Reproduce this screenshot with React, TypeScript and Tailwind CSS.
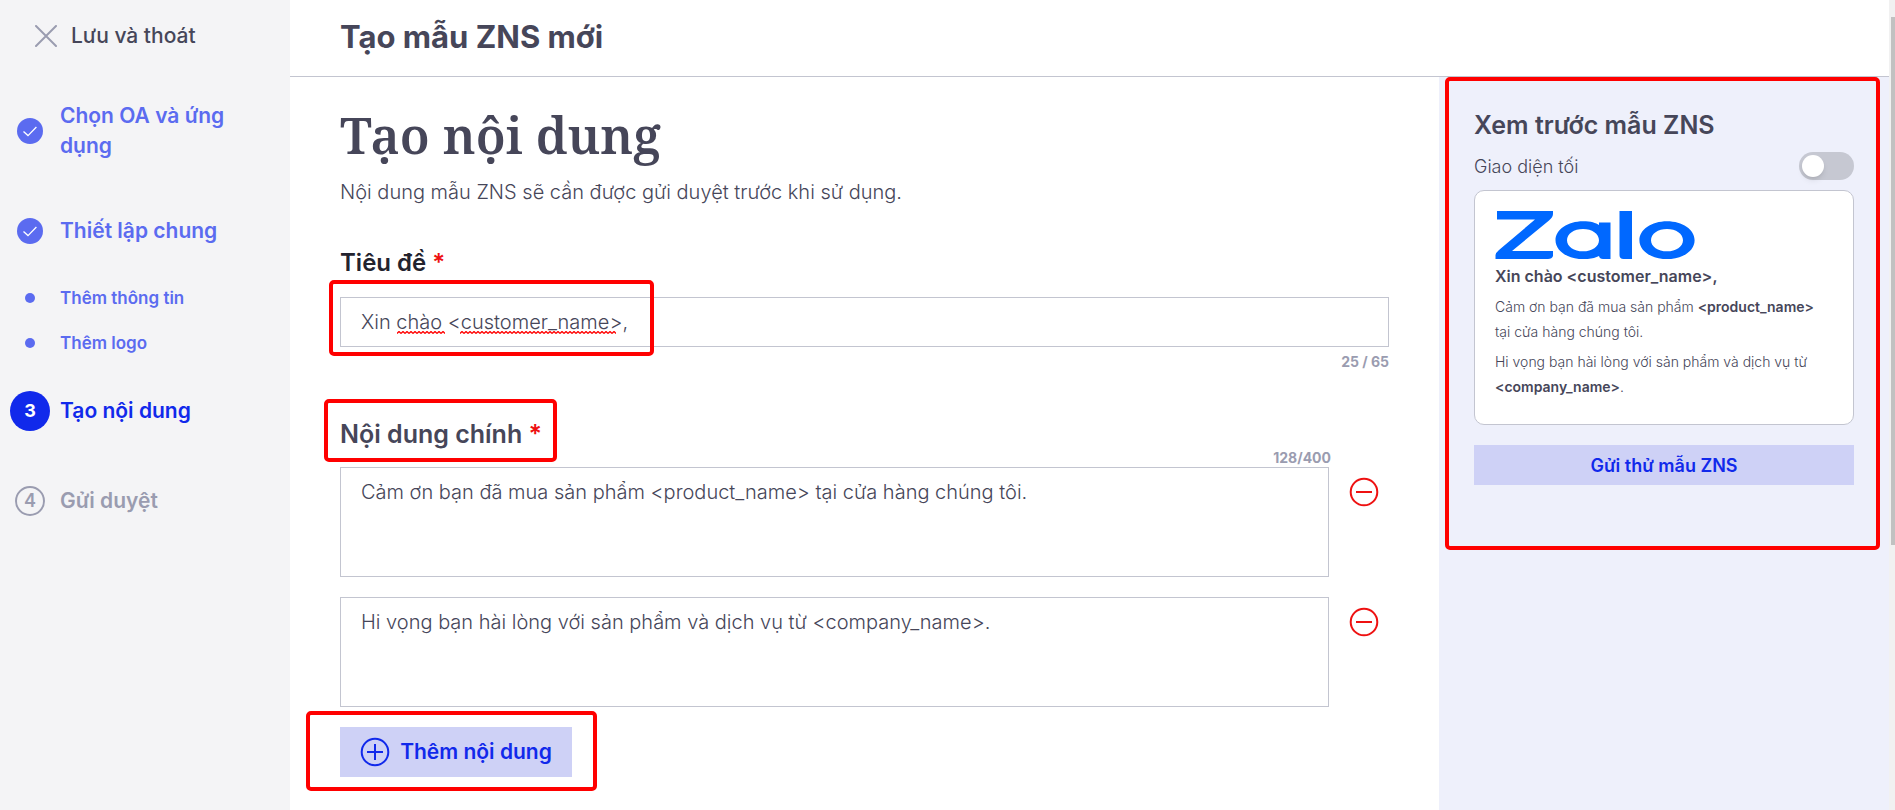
import React, { useState } from "react";

function CheckBadge() {
  return (
    <svg viewBox="0 0 26 26" className="size-[26px]" aria-hidden="true">
      <circle cx="13" cy="13" r="13" fill="#5b6bf0" />
      <path d="M6.5 13.5 L11 17.6 L19.4 9" fill="none" stroke="#fff" strokeWidth="1.3" />
    </svg>
  );
}

function CircleIcon({ plus }: { plus?: boolean }) {
  return (
    <svg viewBox="0 0 30 30" className="size-[30px]" fill="none" stroke="currentColor" strokeWidth="2" aria-hidden="true">
      <circle cx="15" cy="15" r="13.3" />
      <path d={plus ? "M7 15H23M15 7V23" : "M7 15H23"} />
    </svg>
  );
}

function ZaloLogo() {
  return (
    <svg viewBox="0 0 200 48" className="block h-12 w-[200px]" role="img" aria-label="Zalo">
      <g fill="#0068ff">
        <path d="M2 0H58V3Q58 6 54 9.500L17 40H58V45Q57 48 53 48H0.500V44Q1 41.500 4 39L40 8.500H2Z" />
        <path
          fillRule="evenodd"
          d="M88 10.200C96 10.200 101 11.800 104 14V11.500H115.500V48H108Q104.500 48 104 45C100 47 95 48.200 88 48.200C73 48.200 60.500 40 60.500 29.200C60.500 18.500 73 10.200 88 10.200ZM88 18C79 18 72 22.800 72 29.200C72 35.600 79 40.300 88 40.300C97 40.300 104 35.600 104 29.200C104 22.800 97 18 88 18Z"
        />
        <path d="M124.500 0H137V48H128.500Q124.500 48 124.500 44Z" />
      </g>
      <path
        fill="#0068ff"
        fillRule="evenodd"
        d="M172 10.200C187.400 10.200 199.600 18.500 199.600 29.200C199.600 40 187.400 48.200 172 48.200C156.600 48.200 144.400 40 144.400 29.200C144.400 18.500 156.600 10.200 172 10.200ZM172 18C163 18 156 22.800 156 29.200C156 35.600 163 40.300 172 40.300C181 40.300 188 35.600 188 29.200C188 22.800 181 18 172 18Z"
      />
    </svg>
  );
}

function Squiggle({ className }: { className: string }) {
  return (
    <svg className={className} aria-hidden="true">
      <defs>
        <pattern id="wave" width="4" height="3" patternUnits="userSpaceOnUse">
          <path d="M0 2.500L2 0.500L4 2.500" fill="none" stroke="#f00" strokeWidth="1.3" />
        </pattern>
      </defs>
      <rect width="100%" height="100%" fill="url(#wave)" />
    </svg>
  );
}

function Highlight({ className }: { className: string }) {
  return <span aria-hidden="true" className={`pointer-events-none absolute rounded-[5px] border-4 border-[#ff0000] ${className}`} />;
}

const messages = [
  "Cảm ơn bạn đã mua sản phẩm <product_name> tại cửa hàng chúng tôi.",
  "Hi vọng bạn hài lòng với sản phẩm và dịch vụ từ <company_name>.",
];

export default function App() {
  const [dark, setDark] = useState(false);
  return (
    <div className="flex min-h-screen bg-white font-['Inter','Noto_Sans',sans-serif] text-[#464659]">
      <aside className="w-[290px] shrink-0 bg-[#f4f4f6]">
        <button type="button" className="mt-4 ml-[35px] flex h-10 items-center gap-[14px] text-[21px] font-medium">
          <svg viewBox="0 0 22 22" className="size-[22px]" stroke="#9a9cb0" strokeWidth="2" strokeLinecap="round" aria-hidden="true">
            <path d="M1 1L21 21M21 1L1 21" />
          </svg>
          Lưu và thoát
        </button>
        <ol className="mt-[45px] text-[21px] leading-[30px] font-semibold text-[#5b6bf0]">
          <li className="flex items-center">
            <span className="flex w-[60px] justify-center">
              <CheckBadge />
            </span>
            <a href="#oa" className="w-[180px]">Chọn OA và ứng dụng</a>
          </li>
          <li className="mt-[55px] flex items-center">
            <span className="flex w-[60px] justify-center">
              <CheckBadge />
            </span>
            <a href="#setup">Thiết lập chung</a>
          </li>
          <li className="mt-[37px] flex items-center text-[17px]">
            <span className="flex w-[60px] justify-center">
              <i className="size-[10px] rounded-full bg-[#5b6bf0]" />
            </span>
            <a href="#info">Thêm thông tin</a>
          </li>
          <li className="mt-[15px] flex items-center text-[17px]">
            <span className="flex w-[60px] justify-center">
              <i className="size-[10px] rounded-full bg-[#5b6bf0]" />
            </span>
            <a href="#logo">Thêm logo</a>
          </li>
          <li className="mt-[33px] flex items-center text-[#1129eb]">
            <span className="flex w-[60px] justify-center">
              <span className="flex size-10 items-center justify-center rounded-full bg-[#1129eb] text-[18px] font-bold text-white">3</span>
            </span>
            <a href="#content" aria-current="step">Tạo nội dung</a>
          </li>
          <li className="mt-[55px] flex items-center text-[#9a9cb0]">
            <span className="flex w-[60px] justify-center">
              <span className="flex size-[30px] items-center justify-center rounded-full border-2 border-[#9a9cb0] text-[18px]">4</span>
            </span>
            <a href="#submit">Gửi duyệt</a>
          </li>
        </ol>
      </aside>

      <div className="flex min-w-0 flex-1 flex-col">
        <header className="flex h-[77px] items-center border-b border-[#c3c5d0] pb-[2px] pl-[50px]">
          <h2 className="text-[31px] font-bold">Tạo mẫu ZNS mới</h2>
        </header>
        <div className="flex flex-1">
          <main className="min-w-0 flex-1 pt-7 pr-[50px] pl-[50px]">
            <h1 className="font-['Noto_Serif',serif] text-[50px] leading-[60px] font-semibold">Tạo nội dung</h1>
            <p className="mt-3 text-[20px] leading-[30px] font-light">
              Nội dung mẫu ZNS sẽ cần được gửi duyệt trước khi sử dụng.
            </p>

            <label htmlFor="title" className="mt-[41px] flex items-center gap-[6px] text-[24px] leading-[30px] font-semibold text-[#23232e]">
              Tiêu đề <span className="text-[#ee1111]">*</span>
            </label>
            <div className="relative mt-[19px]">
              <input
                id="title"
                spellCheck={false}
                defaultValue="Xin chào <customer_name>,"
                className="block h-[50px] w-full border border-[#c3c5d0] bg-white px-5 text-[20px] font-light outline-none"
              />
              <Squiggle className="pointer-events-none absolute top-[34px] left-[57px] h-[3px] w-12" />
              <Squiggle className="pointer-events-none absolute top-[34px] left-[120px] h-[3px] w-[156px]" />
              <Highlight className="-top-[17px] -left-[11px] h-[76px] w-[325px]" />
            </div>
            <div className="mt-[5px] text-right text-[14px] leading-5 font-bold text-[#9a9cb0]">25 / 65</div>

            <h3 className="relative mt-[47px] text-[25px] leading-[30px] font-semibold">
              Nội dung chính <span className="text-[#ee1111]">*</span>
              <Highlight className="-top-5 -left-4 h-[63px] w-[233px]" />
            </h3>
            <div className="pr-[58px] text-right text-[14px] leading-[18px] font-bold text-[#9a9cb0]">128/400</div>
            <div className="flex flex-col gap-5">
              {messages.map((text, i) => (
                <div key={i} className="flex items-start gap-5 pr-[10px]">
                  <textarea
                    aria-label={`Nội dung ${i + 1}`}
                    spellCheck={false}
                    defaultValue={text}
                    className="block h-[110px] min-w-0 flex-1 resize-none border border-[#c3c5d0] bg-white px-5 py-[9px] text-[20px] leading-[30px] font-light outline-none"
                  />
                  <button type="button" aria-label="Xóa" className="mt-[10px] text-[#ee1111]">
                    <CircleIcon />
                  </button>
                </div>
              ))}
            </div>
            <div className="relative mt-5">
              <button type="button" className="flex h-[50px] w-[232px] items-center justify-center gap-[10px] bg-[#ced1f6] text-[21px] font-semibold text-[#1129eb]">
                <CircleIcon plus />
                Thêm nội dung
              </button>
              <Highlight className="-top-4 -left-[34px] h-20 w-[291px]" />
            </div>
          </main>

          <section className="relative w-[450px] shrink-0 bg-[#eef0fb] px-[35px] pt-[33px]">
            <Highlight className="top-0 left-[6px] h-[473px] w-[435px]" />
            <h3 className="text-[25px] leading-[30px] font-semibold">Xem trước mẫu ZNS</h3>
            <label className="mt-3 flex h-7 items-center justify-between text-[18px] font-light">
              Giao diện tối
              <input
                type="checkbox"
                role="switch"
                checked={dark}
                onChange={(e) => setDark(e.target.checked)}
                className="flex h-7 w-[55px] appearance-none items-center rounded-full bg-[#c6c8d2] px-[3px] before:size-[22px] before:rounded-full before:bg-white before:shadow-md checked:justify-end checked:bg-[#1129eb]"
              />
            </label>
            <div className="mt-[10px] min-h-[235px] rounded-[10px] border border-[#c3c5d0] bg-white px-5 pt-5 text-[14px] leading-[25px] font-light">
              <ZaloLogo />
              <p className="mt-[5px] text-[16px] font-semibold">Xin chào &lt;customer_name&gt;,</p>
              <p className="mt-[5px]">
                Cảm ơn bạn đã mua sản phẩm <b className="font-semibold">&lt;product_name&gt;</b> tại cửa hàng chúng tôi.
              </p>
              <p className="mt-[5px]">
                Hi vọng bạn hài lòng với sản phẩm và dịch vụ từ <b className="font-semibold">&lt;company_name&gt;</b>.
              </p>
            </div>
            <button type="button" className="mt-5 h-10 w-full bg-[#ced1f6] text-[18px] font-semibold text-[#1129eb]">
              Gửi thử mẫu ZNS
            </button>
          </section>
        </div>
      </div>

      <div className="w-[6px] shrink-0 bg-[#f1f1f1] pt-[17px] pl-[2px]">
        <div className="h-[528px] bg-[#c1c1c1]" />
      </div>
    </div>
  );
}
